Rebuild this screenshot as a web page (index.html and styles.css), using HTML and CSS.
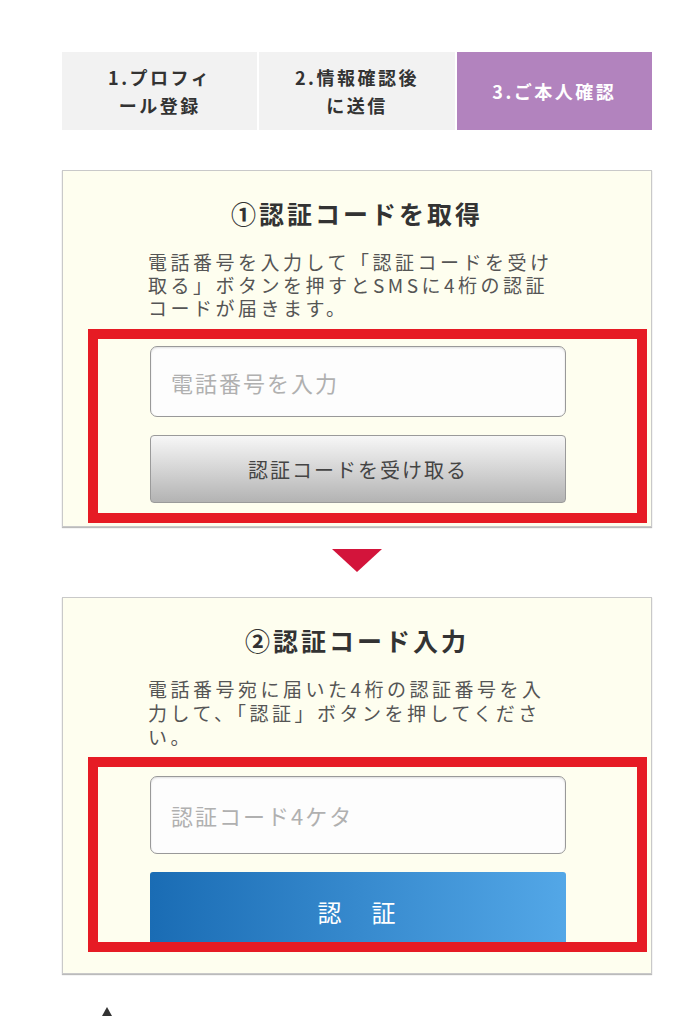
FILE: index.html
```html
<!DOCTYPE html>
<html lang="ja">
<head>
<meta charset="utf-8">
<title>ご本人確認</title>
<link rel="stylesheet" href="styles.css">
</head>
<body>
<div class="page">
	<!-- step tabs -->
	<div class="steps">
		<div class="step">1.プロフィ<br>ール登録</div>
		<div class="step">2.情報確認後<br>に送信</div>
		<div class="step current">3.ご本人確認</div>
	</div>

	<!-- step 1 : get the code -->
	<div class="card">
		<h2 class="card-title">①認証コードを取得</h2>
		<p class="card-text">電話番号を入力して「認証コードを受け取る」ボタンを押すとSMSに4桁の認証コードが届きます。</p>
		<input class="field" type="tel" placeholder="電話番号を入力">
		<button class="btn-gray">認証コードを受け取る</button>
		<div class="mark"></div>
	</div>

	<div class="arrow"></div>

	<!-- step 2 : enter the code -->
	<div class="card card-second">
		<h2 class="card-title">②認証コード入力</h2>
		<p class="card-text">電話番号宛に届いた4桁の認証番号を入力して、「認証」ボタンを押してください。</p>
		<input class="field" type="text" placeholder="認証コード4ケタ">
		<button class="btn-blue">認　証</button>
		<div class="mark"></div>
	</div>

	<div class="pagetop"></div>
</div>
</body>
</html>
```

FILE: styles.css
```css
body {
	margin: 0;
	background-color: #fff;
	font-family: "Noto Sans CJK JP", "Noto Sans", sans-serif;
	color: #333;
}
.page {
	width: 590px;
	margin-left: 62px;
	padding-top: 52px;
}
.steps {
	display: flex;
	gap: 2px;
	height: 78px;
}
.step {
	flex: 1;
	display: flex;
	align-items: center;
	justify-content: center;
	text-align: center;
	background-color: #f2f2f2;
	color: #333;
	font-size: 18px;
	font-weight: bold;
	line-height: 28px;
	letter-spacing: 2.5px;
}
.step.current {
	background-color: #b283be;
	color: #fff;
}
.card {
	position: relative;
	margin-top: 40px;
	background-color: #fefeef;
	border: 1px solid #c9c9c9;
	box-shadow: 0 1px 1px #bbb;
	padding: 27px 0 23px;
	display: flex;
	flex-direction: column;
	align-items: center;
}
.card-title {
	margin: 0;
	font-size: 25px;
	line-height: 30px;
	letter-spacing: 3px;
	font-weight: bold;
	color: #333;
}
.card-text {
	width: 418px;
	margin: 22px 0 27px;
	font-size: 19px;
	line-height: 23px;
	letter-spacing: 3.5px;
	color: #555;
}
.card-second .card-text {
	line-height: 24px;
}
.field {
	box-sizing: border-box;
	width: 416px;
	height: 71px;
	margin-left: 2px;
	padding: 0 20px;
	border: 1px solid #999;
	border-radius: 7px;
	background-color: #fdfdfd;
	box-shadow: inset 0 1px 2px #ddd;
	font-family: inherit;
	font-size: 22px;
	letter-spacing: 2px;
	color: #333;
}
.field::placeholder {
	color: #b0b0b0;
}
.card-second .field {
	height: 78px;
}
.btn-gray, .btn-blue {
	box-sizing: border-box;
	width: 416px;
	margin: 18px 0 0 2px;
	font-family: inherit;
	cursor: pointer;
}
.btn-gray {
	height: 68px;
	border: 1px solid #9a9a9a;
	border-radius: 4px;
	background: linear-gradient(#f7f7f7, #b3b3b3);
	color: #444;
	font-size: 20px;
	letter-spacing: 2px;
}
.btn-blue {
	height: 78px;
	border: none;
	border-radius: 3px;
	background: linear-gradient(to right, #1a6cb4, #53a7e7);
	color: #fff;
	font-size: 24px;
	letter-spacing: 3px;
}
/* red annotation frame drawn over the form */
.mark {
	position: absolute;
	left: 25px;
	top: 158px;
	width: 559px;
	height: 194px;
	box-sizing: border-box;
	border: 10px solid #e61b24;
}
.card-second .mark {
	top: 159px;
	height: 195px;
}
.arrow {
	width: 0;
	height: 0;
	margin: 22px auto 0;
	border-left: 25px solid transparent;
	border-right: 25px solid transparent;
	border-top: 23px solid #d3143b;
}
.card-second {
	margin-top: 25px;
}
.pagetop {
	width: 0;
	height: 0;
	margin: 33px 0 0 40px;
	border-left: 5px solid transparent;
	border-right: 5px solid transparent;
	border-bottom: 9px solid #333;
}
```
